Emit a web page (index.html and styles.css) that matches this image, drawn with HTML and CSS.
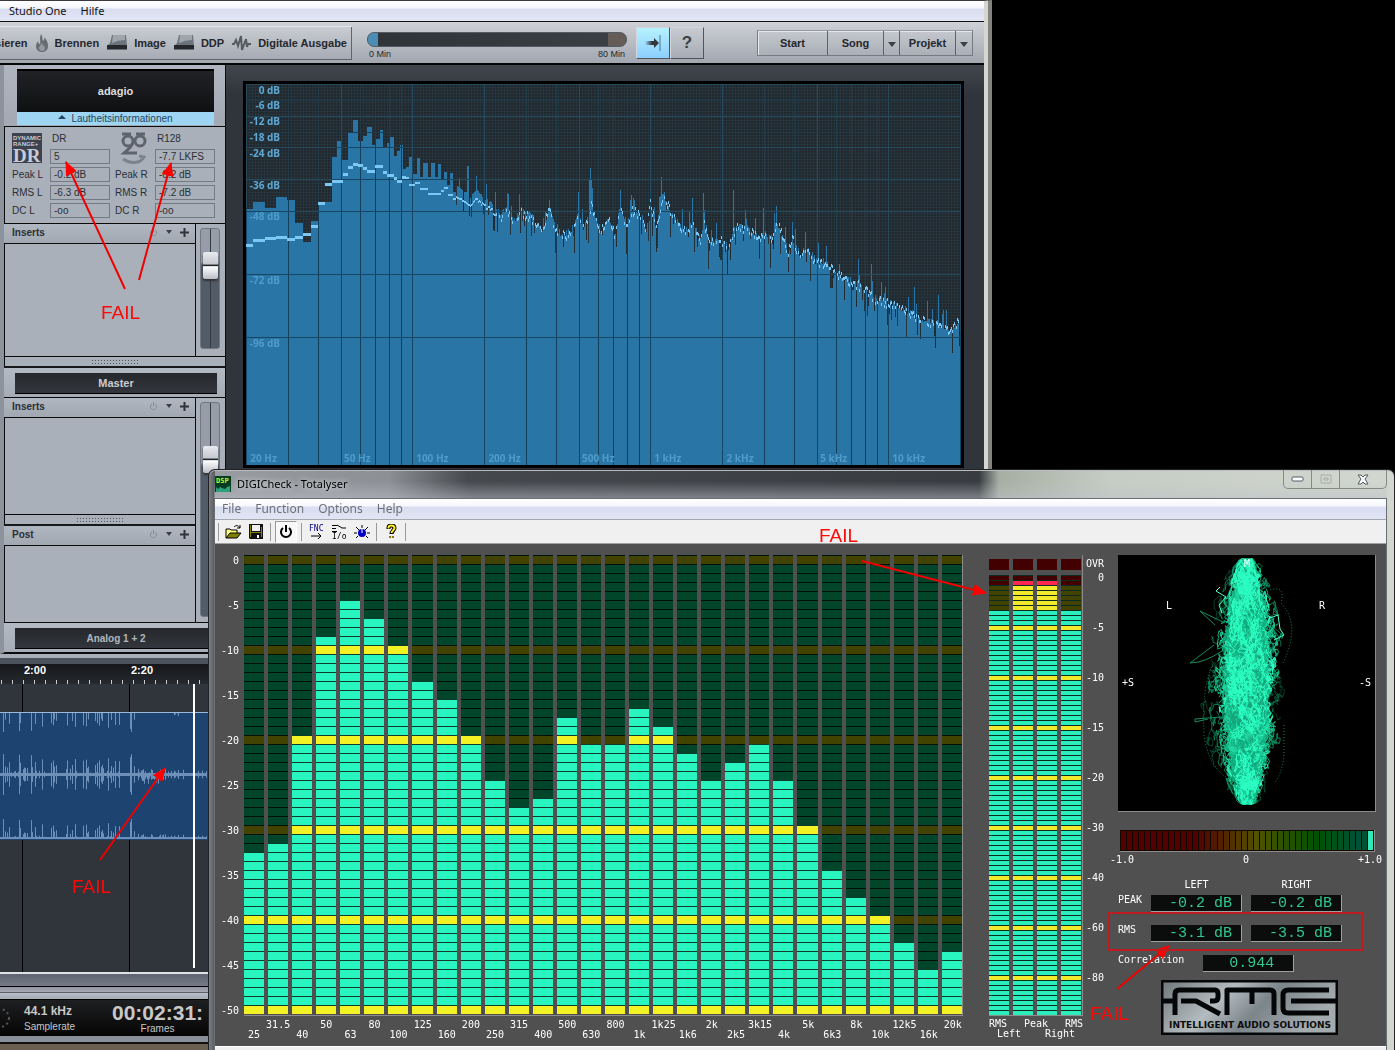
FILE: index.html
```html
<!DOCTYPE html>
<html lang="de">
<head>
    <meta charset="UTF-8">
    <meta name="viewport" content="width=device-width, initial-scale=1.0">
    <title>Studio One / DIGICheck - Totalyser</title>
    <link rel="stylesheet" href="styles.css">
</head>
<body>
    <!-- Studio One -->
    <section class="studio">
        <nav class="studio-menu">
            <button>Studio One</button>
            <button>Hilfe</button>
        </nav>

        <div class="studio-toolbar">
            <div class="tool-group">
                <button>Analysieren</button>
                <button>
                    <svg width="12" height="18" viewBox="0 0 12 18"><path d="M5 0c2 3 1 5 2 7 1-1 2-2 1-4 3 3 4 6 4 9 0 4-3 6-6 6s-6-2-6-6c0-2 1-3 2-5 0 2 1 3 2 3 1-3-1-5 1-10z" fill="#676c74"/><path d="M6 17c-2 0-3-2-3-3 0-2 2-3 3-5 0 2 3 3 3 5s-1 3-3 3z" fill="#9499a1"/></svg>
                    Brennen
                </button>
                <button>
                    <svg width="20" height="17" viewBox="0 0 20 17"><path d="M5 1h14l1 11H0l3-3z" fill="#6d737b"/><path d="M6 1h12v5q-7 0-13 3z" fill="#a0a5ac"/><path d="M0 11h20v4H0z" fill="#25282c"/><path d="M0 15h20v1H0z" fill="#666b73"/></svg>
                    Image
                </button>
                <button>
                    <svg width="20" height="17" viewBox="0 0 20 17"><path d="M5 1h14l1 11H0l3-3z" fill="#6d737b"/><path d="M6 1h12v5q-7 0-13 3z" fill="#a0a5ac"/><path d="M0 11h20v4H0z" fill="#25282c"/><path d="M0 15h20v1H0z" fill="#666b73"/></svg>
                    DDP
                </button>
                <button>
                    <svg width="19" height="16" viewBox="0 0 19 16"><path d="M0 9h2l2-4 2 6 3-10 1 14 4-11 1 8 1-3h3" fill="none" stroke="#565b63" stroke-width="2"/></svg>
                    Digitale Ausgabe
                </button>
            </div>
            <div class="capacity">
                <div class="capacity-bar"></div>
                <div class="capacity-text"><span>0 Min</span><span>80 Min</span></div>
            </div>
            <div class="square-buttons">
                <button class="active" aria-label="Folgen"><svg width="16" height="16" viewBox="0 0 16 16"><defs><linearGradient id="fade"><stop offset="0" stop-color="#333" stop-opacity="0"/><stop offset=".5" stop-color="#30363c"/></linearGradient></defs><path d="M0 6h9V3l5 5-5 5v-3H0z" fill="url(#fade)"/><path d="M15 0v16" stroke="#50708a"/></svg></button>
                <button aria-label="Hilfe">?</button>
            </div>
            <div class="page-buttons">
                <button class="page">Start</button>
                <button>Song</button>
                <button class="arrow" aria-label="Songs"><i></i></button>
                <button>Projekt</button>
                <button class="arrow" aria-label="Projekte"><i></i></button>
            </div>
        </div>

        <div class="studio-body">
            <aside class="sidebar">
                <div class="track-title">
                    <div class="track-name">adagio</div>
                    <button class="loudness"><i></i>Lautheitsinformationen</button>
                </div>

                <div class="info">
                    <svg class="info-logo" width="30" height="30" viewBox="0 0 30 30"><rect width="30" height="30" fill="#3c4250"/><text x="1" y="7" class="dr-small">DYNAMIC</text><text x="1" y="13" class="dr-small">RANGE+</text><text x="1" y="29" class="dr-big">DR</text></svg>
                    <span class="top">DR</span>
                    <svg class="info-logo r128" width="30" height="32" viewBox="0 0 30 32"><g fill="none" stroke="#5e646e" stroke-width="3"><circle cx="9" cy="9" r="5"/><circle cx="21" cy="9" r="5"/><path d="M3 2h9M17 2h9M14 11c-2 5-6 7-9 10h13"/><path d="M4 27c7 5 17 5 21-2l-5-1" stroke="#7d838d"/></g></svg>
                    <span class="top">R128</span>
                    <output>5</output>
                    <output>-7.7 LKFS</output>
                    <span>Peak L</span><output>-0.2 dB</output><span>Peak R</span><output>-0.2 dB</output>
                    <span>RMS L</span><output>-6.3 dB</output><span>RMS R</span><output>-7.2 dB</output>
                    <span>DC L</span><output>-oo</output><span>DC R</span><output>-oo</output>
                </div>

                <div class="channel">
                    <div class="racks">
                        <div class="rack-head">Inserts <button class="power" aria-label="Aktiv"><svg width="9" height="9" viewBox="0 0 9 9"><path d="M3 2a3 3 0 1 0 3 0M4.500 0v4" fill="none" stroke="#868c96"/></svg></button><button aria-label="Menü"><i></i></button><button aria-label="Hinzufügen"><svg width="9" height="9" viewBox="0 0 9 9"><path d="M4.500 0v9M0 4.500h9" stroke="#30343a" stroke-width="2"/></svg></button></div>
                        <div class="rack-body rack-large"></div>
                    </div>
                    <input class="fader fader-short" type="range" min="0" max="100" value="75" aria-label="Pegel adagio">
                </div>
                <div class="splitter"><i></i></div>
                <div class="bus"><button>Master</button></div>
                <div class="channel">
                    <div class="racks">
                        <div class="rack-head">Inserts <button class="power" aria-label="Aktiv"><svg width="9" height="9" viewBox="0 0 9 9"><path d="M3 2a3 3 0 1 0 3 0M4.500 0v4" fill="none" stroke="#868c96"/></svg></button><button aria-label="Menü"><i></i></button><button aria-label="Hinzufügen"><svg width="9" height="9" viewBox="0 0 9 9"><path d="M4.500 0v9M0 4.500h9" stroke="#30343a" stroke-width="2"/></svg></button></div>
                        <div class="rack-body rack-medium"></div>
                        <div class="splitter"><i></i></div>
                        <div class="rack-head">Post <button class="power" aria-label="Aktiv"><svg width="9" height="9" viewBox="0 0 9 9"><path d="M3 2a3 3 0 1 0 3 0M4.500 0v4" fill="none" stroke="#868c96"/></svg></button><button aria-label="Menü"><i></i></button><button aria-label="Hinzufügen"><svg width="9" height="9" viewBox="0 0 9 9"><path d="M4.500 0v9M0 4.500h9" stroke="#30343a" stroke-width="2"/></svg></button></div>
                        <div class="rack-body rack-small"></div>
                    </div>
                    <input class="fader fader-long" type="range" min="0" max="100" value="77" aria-label="Pegel Master">
                </div>
                <div class="bus output"><button>Analog 1 + 2</button></div>
            </aside>

            <main class="spectrum-panel">
                <div class="spectrum" id="spectrum">
                    <canvas id="spectrum-canvas" width="715" height="381"></canvas>
                </div>
            </main>
        </div>

        <div class="timeline">
            <div class="ruler">
                <span>2:00</span><span>2:20</span><span>2:40</span>
            </div>
            <div class="track-area">
                <div class="clip"><canvas id="wave-canvas" width="207" height="127"></canvas></div>
                <div class="playhead"></div>
            </div>
        </div>
        <div class="timeline-scroll"></div>
        <div class="transport">
            <svg width="24" height="24" viewBox="0 0 24 24"><circle cx="11" cy="12" r="9" fill="none" stroke="#555" stroke-width="2" stroke-dasharray="2 3"/></svg>
            <div class="rate"><b>44.1 kHz</b><span>Samplerate</span></div>
            <div class="time"><b>00:02:31:</b><span>Frames</span></div>
        </div>
        <div class="studio-end"></div>
    </section>

    <!-- DIGICheck -->
    <section class="digi">
        <header class="digi-title">
            <svg width="16" height="16" viewBox="0 0 16 16"><rect width="16" height="16" fill="#063c22"/><path d="M1 16v-5l2 2 2-2 2 1 3 1 2-2 3-1v6z" fill="#2da07b"/><text x="1" y="7" class="dsp">DSP</text></svg>
            <h1>DIGICheck - Totalyser</h1>
            <div class="window-buttons">
                <button aria-label="Minimieren"><svg width="13" height="6" viewBox="0 0 13 6"><rect x="1" y="1" width="11" height="4" rx="1" fill="#fff" stroke="#555c66"/></svg></button>
                <button aria-label="Maximieren" disabled><svg width="12" height="10" viewBox="0 0 12 10"><path d="M1 1h10v8H1zM4 4h4v2H4z" fill="none" stroke="#a7aca6"/></svg></button>
                <button class="close" aria-label="Schließen"><svg width="12" height="11" viewBox="0 0 12 11"><path d="M1 1h3l2 2 2-2h3L8 5l3 5H8L6 8l-2 2H1l3-5z" fill="#fff" stroke="#50565e"/></svg></button>
            </div>
        </header>

        <div class="digi-client">
            <nav class="digi-menu">
                <button>File</button><button>Function</button><button>Options</button><button>Help</button>
            </nav>
            <div class="digi-toolbar">
                <hr>
                <button aria-label="Open"><svg width="17" height="16" viewBox="0 0 17 16"><path d="M1 14V5h4l1 1h6v3" fill="#ffff80" stroke="#000"/><path d="M1 14l4-5h11l-4 5z" fill="#808000" stroke="#000"/><path d="M9 3c2-2 4-2 6 1M15 1v3h-3" fill="none" stroke="#000"/></svg></button>
                <button aria-label="Save"><svg width="15" height="15" viewBox="0 0 15 15"><path d="M0 0h14v15H1L0 14z" fill="#111"/><path d="M1 1h1v12H1zM12 3h1v10h-1zM2 8h10v1H2z" fill="#808000"/><path d="M3 1h8v6H3z" fill="#eee"/><path d="M8 11h2v3H8z" fill="#fff"/></svg></button>
                <hr>
                <button class="pressed" aria-label="Power"><svg width="12" height="13" viewBox="0 0 12 13"><path d="M3 3a5 5 0 1 0 6 0M6 0v7" fill="none" stroke="#000" stroke-width="2"/></svg></button>
                <hr>
                <button aria-label="Function"><svg width="17" height="15" viewBox="0 0 17 15"><text x="1" y="7" class="fnc">FNC</text><path d="M3 12h9M10 9l3 3-3 3" fill="none" stroke="#000"/></svg></button>
                <button aria-label="Input Output"><svg width="16" height="15" viewBox="0 0 16 15"><path d="M1 1.500h5M1 4.500h4M1 7.500h5M6 1l5 3h4" fill="none" stroke="#000"/><text x="1" y="15" class="io">I/o</text></svg></button>
                <button aria-label="Level"><svg width="16" height="14" viewBox="0 0 16 14"><circle cx="8" cy="8" r="4" fill="#0000c8"/><path d="M8 0v3M2 2l3 3M14 2l-3 3M0 8h3M13 8h3M2 13l2-2M14 13l-2-2" stroke="#000"/><path d="M8 4v4" stroke="#fff"/></svg></button>
                <hr>
                <button aria-label="Help"><svg width="11" height="15" viewBox="0 0 11 15"><path d="M2.500 5V3.500c0-1 1-2 3-2s3 1 3 2.500c0 2-3 3-3 6M5.500 12v2" fill="none" stroke="#000" stroke-width="4"/><path d="M2.500 4.500v-1c0-1 1-2 3-2s3 1 3 2.500c0 2-3 3-3 5M5.500 12v2" fill="none" stroke="#ffee20" stroke-width="2"/></svg></button>
                <hr>
            </div>

            <div class="analyser">
                <div class="bands">
                    <div class="scale scale-bands" id="band-scale"></div>
                    <div class="band-block">
                        <div class="band-bars" id="band-bars"></div>
                        <div class="band-labels" id="band-labels"></div>
                    </div>
                </div>

                <div class="meters">
                    <div class="meter-block">
                        <div class="meter-bars">
                            <div class="meter"><div class="over"></div><div class="level rms"></div></div>
                            <div class="meter"><div class="over"></div><div class="level peak"></div></div>
                            <div class="meter"><div class="over"></div><div class="level peak"></div></div>
                            <div class="meter"><div class="over"></div><div class="level rms"></div></div>
                        </div>
                        <div class="meter-labels"><span>RMS</span><span>Peak</span><span>RMS</span></div>
                        <div class="meter-labels sides"><span>Left</span><span>Right</span></div>
                    </div>
                    <div class="scale scale-meters" id="meter-scale"><span class="ovr">OVR</span></div>
                </div>

                <div class="readout">
                    <div class="gonio">
                        <canvas id="gonio-canvas" width="256" height="256"></canvas>
                        <span class="m">M</span><span class="l">L</span><span class="r">R</span><span class="plus">+S</span><span class="minus">-S</span>
                    </div>
                    <div class="correlation" id="correlation"></div>
                    <div class="correlation-scale"><span>-1.0</span><span>0</span><span>+1.0</span></div>
                    <table class="values">
                        <tr><td></td><th scope="col">LEFT</th><th scope="col">RIGHT</th></tr>
                        <tr><th scope="row">PEAK</th><td><output>-0.2 dB</output></td><td><output>-0.2 dB</output></td></tr>
                        <tr><th scope="row">RMS</th><td><output>-3.1 dB</output></td><td><output>-3.5 dB</output></td></tr>
                    </table>
                    <div class="corr-value"><label for="corr">Correlation</label><output id="corr">0.944</output></div>
                    <svg class="rme" width="177" height="55" viewBox="0 0 177 55">
                        <defs><linearGradient id="steel" x2="1" y2=".3"><stop offset="0" stop-color="#6f777b"/><stop offset=".4" stop-color="#b4bcc0"/><stop offset=".65" stop-color="#7c858a"/><stop offset="1" stop-color="#a3abaf"/></linearGradient></defs>
                        <rect x="1" y="1" width="175" height="53" fill="url(#steel)" stroke="#050607" stroke-width="3"/>
                        <g fill="none" stroke="#050607" stroke-width="5" stroke-linejoin="round">
                            <path d="M2 21h12M14 35V14q0-4 4-4h36q3 0 3 4v3q0 4-4 4H49M20 21h15l24 13"/>
                            <path d="M66 35V10h43q4 0 4 4v21M91 10v14"/>
                            <path d="M168 10h-41q-5 0-5 5v13q0 5 5 5h41M130 21h45"/>
                        </g>
                        <text x="89" y="48" class="rme-text">INTELLIGENT AUDIO SOLUTIONS</text>
                    </svg>
                </div>
            </div>
            <div class="digi-status"></div>
        </div>
    </section>

    <!-- Markierungen -->
    <svg class="marks" width="1395" height="1050" viewBox="0 0 1395 1050">
        <defs><marker id="head" markerUnits="userSpaceOnUse" markerWidth="14" markerHeight="12" refX="13" refY="6" orient="auto"><path d="M0 0l14 6-14 6z" fill="#f00"/></marker></defs>
        <g stroke="#f00000" stroke-width="2" marker-end="url(#head)">
            <path d="M125 289L66 162"/>
            <path d="M139 280L171 163"/>
            <path d="M100 860L165 768"/>
            <path d="M862 561L986 593"/>
            <path d="M1117 989L1169 946"/>
        </g>
        <rect x="1109" y="913" width="253" height="37" fill="none" stroke="#c01c20" stroke-width="2"/>
        <text x="101" y="319">FAIL</text>
        <text x="72" y="893">FAIL</text>
        <text x="819" y="542">FAIL</text>
        <text x="1090" y="1020">FAIL</text>
    </svg>

    <script src="script.js"></script>
</body>
</html>
```

FILE: styles.css
```css
* {
    box-sizing: border-box;
}
body {
    margin: 0;
    height: 100vh;
    background-color: #000;
    font-family: "Liberation Sans", Arial, sans-serif;
    font-size: 11px;
    overflow: hidden;
    position: relative;
}
button {
    border: 0;
    margin: 0;
    padding: 0;
    background: none;
    color: inherit;
    font: inherit;
    white-space: nowrap;
}
svg, canvas {
    display: block;
    flex: none;
}

/* Studio One */
.studio {
    position: absolute;
    top: 0;
    left: 0;
    right: 403px;
    background-color: #a8aeb8;
    border-top: 1px solid #3c3a3e;
    border-right: 8px ridge #d6d6d0;
    box-shadow: inset -1px 0 #222;
}
.studio-menu {
    display: flex;
    gap: 14px;
    height: 21px;
    padding-left: 9px;
    background: linear-gradient(#fff 0, #f4f6fb 35%, #d8def0 40%, #e3e6f5);
    border-bottom: 1px solid #111;
    font-family: "Noto Sans", sans-serif;
    font-size: 11px;
    line-height: 18px;
    color: #111;
}
.studio-toolbar {
    display: flex;
    align-items: center;
    height: 43px;
    background: linear-gradient(#ced1d6, #a2a7b0);
    border-bottom: 2px solid #050608;
    font-weight: bold;
    color: #24272c;
}
.tool-group {
    display: flex;
    justify-content: flex-end;
    align-items: center;
    gap: 8px;
    width: 352px;
    height: 34px;
    padding-right: 5px;
    overflow: hidden;
    border: 1px solid #e2e4e8;
    border-width: 1px 0;
    border-bottom-color: #60656d;
    box-shadow: inset -1px 0 #60656d;
}
.tool-group button {
    display: flex;
    align-items: center;
    gap: 7px;
}
.capacity {
    width: 260px;
    margin-left: 15px;
    padding-top: 8px;
}
.capacity-bar {
    height: 15px;
    border-radius: 7px;
    border: 1px solid #555b63;
    background: linear-gradient(to right, #4c8db5 10px, #303439 10px, #3b3f44 240px, #655c58 240px);
}
.capacity-text {
    display: flex;
    justify-content: space-between;
    padding: 2px;
    font-size: 9px;
    font-weight: normal;
}
.square-buttons {
    display: flex;
    margin-left: 9px;
}
.square-buttons button {
    display: grid;
    place-items: center;
    width: 34px;
    height: 32px;
    border: 1px solid #d3d6da;
    border-right-color: #50555d;
    border-bottom-color: #50555d;
    font-size: 17px;
    color: #3b4047;
}
.square-buttons .active {
    background: linear-gradient(#b6f1ff, #8ccfff);
}
.page-buttons {
    display: flex;
    margin: 0 11px 0 auto;
    border: 1px solid #767b83;
    border-top-color: #9297a0;
    box-shadow: inset 1px 1px #e6e8eb;
}
.page-buttons button {
    width: 56px;
    height: 24px;
    border-right: 1px solid #5d626a;
}
.page-buttons .page {
    width: 70px;
}
.page-buttons .arrow {
    width: 16px;
}
.page-buttons button:last-child {
    border-right: 0;
}
.page-buttons i, .rack-head i {
    display: inline-block;
    border: 4px solid transparent;
    border-top: 5px solid #3b4047;
    border-bottom: 0;
}
.rack-head i {
    border-width: 3px;
    border-top-width: 4px;
    margin-bottom: 2px;
}
.studio-body {
    display: flex;
    padding-bottom: 4px;
}

/* Sidebar */
.sidebar {
    flex: none;
    width: 226px;
    border: 1px solid #0a0b0d;
    border-width: 0 1px 1px;
    border-left: 4px solid #8d939d;
    box-shadow: inset 1px 0 #0a0b0d;
    background-color: #aab0ba;
    font-size: 10px;
    color: #2b2f36;
}
.track-title {
    padding: 4px 11px 1px 13px;
    border-bottom: 1px solid #0a0b0d;
    background: linear-gradient(#b0b5bf, #a3a9b3);
}
.track-name {
    height: 43px;
    border-top: 2px solid #000;
    background: linear-gradient(#202226, #0f1012);
    color: #dedede;
    font-size: 11px;
    font-weight: bold;
    line-height: 40px;
    text-align: center;
}
.loudness {
    display: block;
    width: 100%;
    height: 13px;
    background-color: #9ed5f3;
    color: #24455e;
    line-height: 13px;
}
.loudness i {
    display: inline-block;
    margin: 0 5px 3px 0;
    border: 4px solid transparent;
    border-bottom: 4px solid #24455e;
    border-top: 0;
}
.info {
    display: grid;
    grid-template-columns: 33px 60px 35px 60px;
    column-gap: 5px;
    row-gap: 3px;
    align-items: center;
    height: 97px;
    padding: 5px 0 6px 8px;
    border-bottom: 1px solid #0a0b0d;
}
.info-logo {
    grid-row: span 2;
}
.info .r128 {
    grid-column: 3;
    margin-left: 4px;
}
.info .top {
    padding-left: 2px;
}
.info output {
    height: 15px;
    padding-left: 3px;
    border: 1px solid #747a84;
    line-height: 13px;
}
.info span {
    white-space: nowrap;
    line-height: 13px;
}
.dr-small {
    font: bold 6px "Liberation Sans", sans-serif;
    fill: #c8ccd4;
}
.dr-big {
    font: bold 19px "Liberation Serif", serif;
    fill: #c8ccd4;
}
.channel {
    display: flex;
    border-bottom: 1px solid #0a0b0d;
}
.racks {
    width: 192px;
    border-right: 1px solid #0a0b0d;
}
.rack-head {
    display: flex;
    align-items: center;
    gap: 8px;
    height: 20px;
    padding: 0 6px 2px 8px;
    border-bottom: 1px solid #0a0b0d;
    background: linear-gradient(#b1b7c0, #a2a8b2);
    font-weight: bold;
}
.rack-head .power {
    margin-left: auto;
}
.rack-large {
    height: 112px;
}
.rack-medium {
    height: 97px;
    border-bottom: 1px solid #0a0b0d;
}
.rack-small {
    height: 76px;
}
.splitter {
    height: 11px;
    border-bottom: 2px solid #16181b;
    padding-top: 2px;
}
.splitter i {
    display: block;
    width: 47px;
    height: 6px;
    margin: 0 auto;
    background: radial-gradient(circle, #50565f 1px, transparent 1px) 0 0 / 3px 3px;
}
.bus {
    padding: 5px 8px 3px 11px;
    border-bottom: 1px solid #0a0b0d;
    background: linear-gradient(#b4bac3, #a6acb6);
}
.bus button {
    display: block;
    width: 100%;
    height: 21px;
    border-bottom: 1px solid #000;
    background: linear-gradient(#24272b, #33373d);
    color: #c9cdd4;
    font-size: 11px;
    font-weight: bold;
}
.output button {
    font-size: 10px;
    color: #b2b7be;
}
.fader {
    appearance: none;
    writing-mode: vertical-lr;
    direction: rtl;
    width: 20px;
    margin: 4px 0 0 4px;
    border: 1px solid #707781;
    border-radius: 3px;
    background: linear-gradient(to right, transparent 9px, #343a42 9px 10px, transparent 10px), linear-gradient(#969da8 28%, #525c68 30%);
}
.fader-short {
    height: 121px;
}
.fader-long {
    height: 215px;
}
.fader::-webkit-slider-thumb {
    appearance: none;
    width: 15px;
    height: 27px;
    border-radius: 2px;
    background: linear-gradient(#e8ebef, #c4c9d0 45%, #1f2328 48%, #1f2328 52%, #fff 54%, #b9bec6);
    box-shadow: 0 2px 2px #333;
}

/* Spectrum */
.spectrum-panel {
    flex: 1;
    padding: 16px 20px 0 17px;
    background: linear-gradient(#42474d, #30343b 30px);
}
.spectrum {
    position: relative;
    border: 3px solid #000;
    font-family: "Noto Sans", sans-serif;
    font-weight: bold;
    font-size: 10px;
    color: #5fa8d4;
}
.spectrum canvas {
    width: 100%;
    height: 381px;
}
.spectrum span {
    position: absolute;
    line-height: 12px;
    white-space: nowrap;
}
.spectrum .db {
    right: calc(100% - 34px);
}
.spectrum .low {
    color: #4f9bca;
}
.spectrum .hz {
    bottom: 1px;
    color: #4f9bca;
}

/* Timeline */
.timeline {
    border-top: 6px solid #4b535d;
    background-color: #30343b;
    overflow: hidden;
}
.ruler {
    display: flex;
    height: 20px;
    padding-left: 22px;
    background: linear-gradient(to right, #ccc 1px, transparent 1px) 1px 100% / 11px 4px repeat-x, linear-gradient(#15171a, #262a2e);
    color: #fff;
    font-weight: bold;
}
.ruler span {
    width: 107px;
    padding-left: 2px;
    line-height: 12px;
}
.track-area {
    position: relative;
    height: 288px;
    padding-top: 28px;
    background: repeating-linear-gradient(to right, transparent 0 22px, #000 22px 23px, transparent 23px 107px);
}
.clip {
    border-top: 1px solid #9db8d8;
    background-color: #1d4470;
}
.playhead {
    position: absolute;
    top: 0;
    left: 193px;
    width: 2px;
    height: 284px;
    background-color: #fff;
}
.timeline-scroll {
    height: 28px;
    border-top: 2px solid #dfe3e8;
    border-bottom: 1px solid #000;
    background: linear-gradient(#5f6570, #757b86 12px, #000 12px, #000 13px, #8e96a1 13px, #a4abb5 18px, #000 18px, #bac0ca 19px, #aab0ba 23px);
}
.transport {
    display: flex;
    height: 36px;
    background: linear-gradient(#1e1f21, #050505);
    color: #c8c8c8;
}
.transport svg {
    margin: 6px 11px 0 -11px;
}
.transport div {
    display: flex;
    flex-direction: column;
}
.transport span {
    font-size: 10px;
}
.rate {
    width: 88px;
    padding-top: 4px;
    gap: 3px;
}
.rate b {
    font-size: 12px;
    line-height: 14px;
}
.time {
    align-items: center;
    padding-top: 2px;
}
.time b {
    font-size: 21px;
    line-height: 21px;
}
.studio-end {
    height: 14px;
    border-bottom: 6px solid #6c6150;
    background: linear-gradient(#8a9099 6px, #111 6px);
}

/* DIGICheck */
.digi {
    position: absolute;
    top: 469px;
    left: 208px;
    right: 0;
    bottom: 0;
    padding: 0 7px 0 5px;
    border: 1px solid #222;
    border-width: 1px 1px 0;
    border-radius: 7px 7px 0 0;
    background: linear-gradient(to right, #7c8086 0, #55595f 6px, transparent 6px), linear-gradient(to right, #999da2 0, #8c9095 180px, #45494e 260px, #383c41 770px, #a5aea3 790px, #c6cdc4 900px, #d2d7d0);
    box-shadow: inset 0 1px #b8bcc0;
    overflow: hidden;
}
.digi-title {
    display: flex;
    gap: 6px;
    height: 28px;
    padding: 6px 0 0 1px;
    background: linear-gradient(transparent 40%, rgba(190, 194, 200, 0.5));
}
.dsp {
    font: bold 7px "DejaVu Sans Mono", monospace;
    fill: #b7f531;
}
.digi-title h1 {
    margin: 0;
    font: 11px/16px "Noto Sans", sans-serif;
    color: #000;
    text-shadow: 0 0 6px #fff;
}
.window-buttons {
    display: flex;
    height: 19px;
    margin: -6px 0 0 auto;
    border: 1px solid #858a84;
    border-top: 0;
    border-radius: 0 0 5px 5px;
}
.window-buttons button {
    display: grid;
    place-items: center;
    width: 28px;
    border-right: 1px solid #858a84;
}
.window-buttons .close {
    width: 46px;
    border: 0;
}
.digi-client {
    border: 1px solid #6b6f74;
    background-color: #f0f0f0;
}
.digi-menu {
    display: flex;
    gap: 14px;
    height: 21px;
    padding-left: 7px;
    background: linear-gradient(#fff 0, #f6f7fc 35%, #d8def0 40%, #e1e5f4);
    border-bottom: 1px solid #a5a8b0;
    font-family: "Noto Sans", sans-serif;
    font-size: 12px;
    line-height: 18px;
    color: #6e7079;
}
.digi-toolbar {
    display: flex;
    align-items: center;
    height: 24px;
    padding-left: 2px;
    gap: 3px;
    background-color: #f0f0f0;
    border-bottom: 1px solid #a0a0a0;
}
.digi-toolbar button {
    display: grid;
    place-items: center;
    width: 20px;
    height: 22px;
}
.digi-toolbar .pressed {
    border: 1px solid #999;
    border-right-color: #fff;
    border-bottom-color: #fff;
    background-color: #f8f8f8;
    width: 22px;
}
.digi-toolbar hr {
    width: 1px;
    height: 18px;
    margin: 0 1px;
    border: 0;
    background-color: #999;
}
.fnc {
    font: 8px "DejaVu Sans Mono", monospace;
    fill: #000080;
}
.io {
    font: 8px "DejaVu Sans Mono", monospace;
}
.analyser {
    display: flex;
    height: 502px;
    padding-top: 11px;
    background-color: #505050;
    color: #fff;
    font: 10px/10px "DejaVu Sans Mono", monospace;
}
.scale span {
    display: block;
    text-align: right;
}
.bands {
    display: flex;
    flex: 1;
}
.scale-bands {
    width: 24px;
    margin-right: 5px;
}
.scale-bands span {
    height: 45px;
    padding-top: 1px;
}
.band-block {
    flex: 1;
}
.band-bars {
    display: flex;
    gap: 4px;
    border: 1px solid #8c8c8c;
    border-width: 0 1px 1px 0;
    padding-bottom: 1px;
}
.band {
    display: flex;
    align-items: flex-end;
    flex: 1;
    height: 459px;
    background: repeating-linear-gradient(to top, transparent 0 8px, #001008 8px 9px), repeating-linear-gradient(to top, #434300 0 9px, #01452b 9px 90px);
}
.band div {
    width: 100%;
    background: repeating-linear-gradient(to top, transparent 0 8px, #0c3b2d 8px 9px), repeating-linear-gradient(to top, #f2f224 0 9px, #28f5c0 9px 90px);
}
.band-labels {
    display: flex;
    gap: 4px;
    padding-top: 4px;
}
.band-labels span {
    display: flex;
    justify-content: center;
    flex: 1 1 0;
    min-width: 0;
}
.band-labels span:nth-child(odd) {
    padding-top: 10px;
}
.meters {
    display: flex;
    flex: none;
    margin: 0 6px 0 26px;
}
.meter-block {
    width: 94px;
}
.meter-bars {
    display: flex;
    gap: 4px;
    padding: 4px 1px 0 0;
    border: 1px solid #8c8c8c;
    border-width: 0 1px 1px 0;
}
.meter {
    flex: 1;
}
.over {
    height: 11px;
    margin-bottom: 5px;
    background-color: #430000;
}
.level {
    height: 440px;
}
.rms {
    background: repeating-linear-gradient(to top, transparent 0 4px, #0c2b20 4px 5px), linear-gradient(#430000 10px, #434300 10px 35px, transparent 35px), repeating-linear-gradient(to top, #2ceebd 0 35px, #f2e82c 35px 40px, #2ceebd 40px 50px);
}
.peak {
    background: repeating-linear-gradient(to top, transparent 0 4px, #0c2b20 4px 5px), linear-gradient(#430000 5px, #ff2850 5px 10px, #f2e82c 10px 35px, transparent 35px), repeating-linear-gradient(to top, #2ceebd 0 35px, #f2e82c 35px 40px, #2ceebd 40px 50px);
}
.meter-labels {
    display: flex;
    justify-content: space-between;
    padding-top: 3px;
}
.sides {
    padding: 0 8px;
}
.scale-meters {
    width: 20px;
    margin-left: 1px;
}
.scale-meters span {
    height: 50px;
    padding-top: 4px;
}
.scale-meters .ovr {
    height: 14px;
}

/* Readout */
.readout {
    flex: none;
    width: 272px;
    margin-right: 4px;
}
.gonio {
    position: relative;
    width: 258px;
    margin-left: 8px;
    border: 1px solid #8c8c8c;
    border-width: 0 1px 1px 0;
    background-color: #000;
}
.gonio span {
    position: absolute;
}
.m {
    top: 4px;
    left: 126px;
}
.l {
    top: 46px;
    left: 48px;
}
.r {
    top: 46px;
    right: 50px;
}
.plus {
    top: 123px;
    left: 4px;
}
.minus {
    top: 123px;
    right: 4px;
}
.correlation {
    display: flex;
    gap: 1px;
    width: 255px;
    height: 22px;
    margin: 18px 0 0 10px;
    padding: 1px;
    background-color: #100800;
    border: 1px solid #8c8c8c;
    border-width: 0 1px 1px 0;
}
.correlation i {
    flex: 1;
}
.correlation-scale {
    display: grid;
    grid-template-columns: 1fr 30px 1fr;
    padding: 3px 0 15px;
    text-align: center;
}
.correlation-scale span:first-child {
    text-align: left;
}
.correlation-scale span:last-child {
    text-align: right;
}
.values {
    margin-left: 8px;
    border-collapse: collapse;
}
.values th, .values td {
    padding: 0;
    font-weight: normal;
    text-align: left;
    vertical-align: top;
}
.values td {
    width: 100px;
    padding-bottom: 13px;
}
.values td:first-child {
    width: 33px;
    padding: 0;
}
.values th[scope="col"] {
    height: 15px;
    padding-right: 9px;
    text-align: center;
}
.readout output {
    display: block;
    width: 91px;
    height: 17px;
    padding-right: 9px;
    background-color: #0a0d0c;
    border: 1px solid #a0a0a0;
    border-width: 0 1px 1px 0;
    color: #30c890;
    font: 15px/17px "Liberation Mono", monospace;
    text-align: right;
}
.corr-value {
    display: flex;
    gap: 19px;
    margin-left: 8px;
}
.corr-value output {
    padding-right: 19px;
}
.rme {
    margin: 8px 0 0 51px;
}
.rme-text {
    font: bold 9px "DejaVu Sans", sans-serif;
    text-anchor: middle;
    fill: #0b0d0e;
}
.digi-status {
    height: 14px;
    border-top: 1px solid #fff;
}
.marks {
    position: absolute;
    top: 0;
    left: 0;
    pointer-events: none;
}
.marks text {
    font-size: 19px;
    fill: #ff0808;
}
```

FILE: script.js
```js
// Fester Startwert, damit die Kurven immer gleich aussehen
let seed = 7;
function rnd() {
    seed = (seed * 16807) % 2147483647;
    return seed / 2147483647;
}

function span(parent, text, className) {
    const el = document.createElement('span');
    el.textContent = text;
    if (className) el.className = className;
    parent.appendChild(el);
    return el;
}

// Terzbänder: Name und erstes leuchtendes Segment
const bands = [
    ['25', 33], ['31.5', 32], ['40', 20], ['50', 9], ['63', 5], ['80', 7], ['100', 10], ['125', 14],
    ['160', 16], ['200', 20], ['250', 25], ['315', 28], ['400', 27], ['500', 18], ['630', 21],
    ['800', 21], ['1k', 17], ['1k25', 19], ['1k6', 22], ['2k', 25], ['2k5', 23], ['3k15', 21],
    ['4k', 25], ['5k', 30], ['6k3', 35], ['8k', 38], ['10k', 40], ['12k5', 43], ['16k', 46], ['20k', 44]
];
const bandBars = document.getElementById('band-bars');
const bandLabels = document.getElementById('band-labels');
bands.forEach(([name, top]) => {
    const band = document.createElement('div');
    const lit = document.createElement('div');
    band.className = 'band';
    lit.style.height = ((51 - top) / 51 * 100) + '%';
    band.appendChild(lit);
    bandBars.appendChild(band);
    span(bandLabels, name);
});
for (let db = 0; db <= 50; db += 5) {
    span(document.getElementById('band-scale'), db ? '-' + db : '0');
}
['0', '-5', '-10', '-15', '-20', '-30', '-40', '-60', '-80'].forEach(t => span(document.getElementById('meter-scale'), t));

// Korrelationsbalken
const correlation = document.getElementById('correlation');
for (let i = 0; i < 42; i++) {
    const seg = document.createElement('i');
    const hue = i < 12 ? 0 : Math.min(160, (i - 12) * 6);
    seg.style.background = i === 41 ? '#30e8b8' : `hsl(${hue}, 100%, 16%)`;
    correlation.appendChild(seg);
}

// Spektrum
function drawSpectrum() {
    const c = document.getElementById('spectrum-canvas').getContext('2d');
    const W = 715, H = 381;
    const steps = [[0,209],[7,202],[19,208],[30,197],[41,200],[49,223],[57,242],[65,221],[72,202],[86,157],[91,141],[96,160],[102,132],[107,120],[112,141],[117,136],[121,127],[126,145],[130,139],[134,130],[137,148],[141,143],[144,137],[148,156],[151,151],[154,145],[157,169],[160,167],[163,157],[166,174],[171,158],[174,177],[177,163],[182,177],[185,163],[189,177],[192,164],[195,179],[198,172],[201,185],[204,173],[207,192]];
    const avgSteps = [[0,245],[7,240],[19,238],[30,237],[41,239],[49,237],[57,234],[65,226],[72,203],[79,184],[86,181],[97,174],[102,167],[107,164],[112,165],[117,168],[121,171],[129,166],[137,172],[141,175],[148,178],[151,181],[156,177],[163,184],[169,182],[174,188],[182,193],[195,190],[198,187],[202,194],[207,198]];
    const curve = [[210,196],[214,198],[220,202],[224,206],[230,197],[236,204],[244,208],[254,218],[261,209],[269,226],[273,211],[284,216],[297,228],[303,205],[309,230],[319,235],[329,225],[332,212],[337,228],[340,224],[345,204],[349,215],[354,230],[362,217],[369,235],[374,204],[380,226],[386,210],[394,214],[400,228],[404,202],[410,228],[416,196],[422,205],[430,221],[440,231],[447,224],[454,240],[458,224],[462,240],[475,240],[482,246],[489,227],[502,228],[512,238],[517,232],[526,240],[530,220],[536,235],[542,252],[546,238],[554,256],[560,248],[569,260],[582,263],[589,272],[604,280],[619,288],[629,298],[642,302],[659,310],[674,318],[689,322],[704,330],[714,318]];
    const peaks = {213:178, 221:166, 222:166, 230:176, 240:184, 249:192, 261:193, 273:194, 303:200, 332:192, 343:180, 344:168, 345:180, 346:188, 374:190, 385:195, 388:200, 404:190, 414:196, 415:177, 416:194, 418:192, 446:198, 457:193, 458:210, 487:190, 499:210, 517:208, 530:206, 546:222, 559:232, 612:259, 625:264, 668:287, 692:295};
    const at = (list, x) => { let v = list[0][1]; for (const s of list) { if (x >= s[0]) v = s[1]; } return v - 84; };
    const curveAt = x => {
        for (let i = 1; i < curve.length; i++) {
            if (x <= curve[i][0]) {
                const a = curve[i - 1], b = curve[i];
                return a[1] + (b[1] - a[1]) * (x - a[0]) / (b[0] - a[0]) - 84;
            }
        }
        return 236;
    };
    const tops = [], avg = [];
    for (let x = 0; x < W; x++) {
        if (x < 210) {
            tops[x] = at(steps, x);
            avg[x] = at(avgSteps, x);
        } else {
            const base = curveAt(x), k = Math.min(1, (x - 200) / 90), r = rnd();
            avg[x] = Math.round(base + (rnd() - 0.5) * 9 * k);
            tops[x] = base + (rnd() - 0.5) * 8 * k - (1 - k) * 12;
            if (r < 0.16) tops[x] = base + 8 + rnd() * 22 * k;
            if (r > 0.93) tops[x] = base - 5 - rnd() * 14;
            if (peaks[x]) tops[x] = peaks[x] - 84;
        }
    }

    const grid = (major, minor) => {
        for (let dec = 10; dec <= 10000; dec *= 10) {
            for (let m = 1; m < 10; m++) {
                const x = Math.round(238 * Math.log10(dec * m / 20));
                if (x < 0 || x >= W) continue;
                c.fillStyle = m === 1 || m === 2 || m === 5 ? major : minor;
                c.fillRect(x, 0, 1, H);
            }
        }
        [0, 6, 12, 18, 24, 36, 48, 72, 96].forEach(db => {
            c.fillStyle = db === 6 || db === 18 ? minor : major;
            c.fillRect(0, Math.round(db * 2.64), W, 1);
        });
    };

    c.fillStyle = '#22282c';
    c.fillRect(0, 0, W, H);
    c.fillStyle = 'rgba(45, 85, 105, 0.25)';
    for (let x = 0; x < W; x += 3) c.fillRect(x, 0, 1, H);
    for (let y = 0; y < H; y += 3) c.fillRect(0, y, W, 1);
    grid('#264a5c', '#203a48');

    c.save();
    c.beginPath();
    for (let x = 0; x < W; x++) c.rect(x, Math.round(tops[x]), 1, H);
    c.clip();
    c.fillStyle = '#2976a6';
    c.fillRect(0, 0, W, H);
    grid('#164664', '#12405c');
    c.restore();

    c.fillStyle = '#7cc8f4';
    for (let x = 0; x < W; x++) {
        if (x < 160) c.fillRect(x, avg[x] - 1, 1, 3);
        else if (x < 250) c.fillRect(x, avg[x], 1, 2);
        else if (rnd() < 0.72) c.fillRect(x, avg[x], 1, 3);
    }

    const box = document.getElementById('spectrum');
    [[0, 0], [6, 15], [12, 31], [18, 47], [24, 63], [36, 95], [48, 126], [72, 190], [96, 253]].forEach(([db, y]) => {
        span(box, (db ? '-' + db : '0') + ' dB', db > 40 ? 'db low' : 'db').style.top = y + 'px';
    });
    [['20 Hz', 0.6], ['50 Hz', 13.7], ['100 Hz', 23.8], ['200 Hz', 33.9], ['500 Hz', 47], ['1 kHz', 57.1], ['2 kHz', 67.2], ['5 kHz', 80.3], ['10 kHz', 90.4]].forEach(([t, x]) => {
        span(box, t, 'hz').style.left = x + '%';
    });
}

// Wellenform des Clips
function drawWave() {
    const c = document.getElementById('wave-canvas').getContext('2d');
    c.fillStyle = '#6d8fb8';
    c.fillRect(0, 60, 207, 3);
    c.fillRect(0, 124, 207, 2);
    for (let x = 0; x < 207; x++) {
        const loud = x < 60 || (x > 66 && x < 140);
        let a = rnd() < 0.35 ? rnd() * 8 : 0;
        if (loud && (x % 11 === 9 || x % 16 === 3)) a = 10 + rnd() * 9;
        if (!loud) a = rnd() > 0.6 ? rnd() * 4 : 0;
        c.fillRect(x, 60 - a, 1, a * 2 + 3);
        c.fillRect(x, 125 - a, 1, a);
        if (a > 6 || (x > 172 && x < 182)) c.fillRect(x, 0, 1, a);
    }
    for (let x = 142; x < 160; x++) c.fillRect(x, 61, 1, 2 + rnd() * 8);
}

// Goniometer
function drawGonio() {
    const c = document.getElementById('gonio-canvas').getContext('2d');
    const half = y => {
        const t = (y - 3) / 247;
        return 34 * Math.pow(Math.max(0, Math.sin(Math.PI * t)), 0.6);
    };
    const scribble = (count, spread, color, alpha) => {
        c.strokeStyle = color;
        c.globalAlpha = alpha;
        for (let i = 0; i < count; i++) {
            let y = 4 + rnd() * 245, x = (rnd() * 2 - 1) * half(y) * spread;
            c.beginPath();
            c.moveTo(129 + x, y);
            for (let j = 0; j < 12; j++) {
                const px = x, py = y;
                y = Math.max(4, Math.min(249, y + (rnd() - 0.5) * 16));
                const h = half(y) * spread + 3;
                x = Math.max(-h, Math.min(h, x + (rnd() - 0.5) * 10));
                c.quadraticCurveTo(129 + px + (rnd() - 0.5) * 6, (py + y) / 2, 129 + x, y);
            }
            c.stroke();
        }
    };
    c.lineWidth = 1;
    scribble(60, 1.3, '#0a6a42', 0.6);
    scribble(110, 1.05, '#0f9464', 0.8);
    scribble(130, 0.85, '#1cd49a', 0.8);
    c.globalAlpha = 0.75;
    c.fillStyle = '#20dca4';
    c.beginPath();
    for (let y = 4; y < 249; y += 3) c.lineTo(129 - half(y) * 0.6 - rnd() * 5, y);
    for (let y = 249; y > 4; y -= 3) c.lineTo(129 + half(y) * 0.6 + rnd() * 5, y);
    c.fill();
    scribble(90, 0.75, '#2cffc4', 0.9);
    scribble(70, 0.65, '#10a87c', 0.9);
    scribble(90, 0.45, '#2cffc4', 1);

    // Ausreißer
    c.globalAlpha = 1;
    c.strokeStyle = '#178a5c';
    c.stroke(new Path2D('M107 68L82 56L97 70M96 90L72 108Q86 108 104 96M103 162L77 164V167L90 164'));
    c.setLineDash([1, 2]);
    c.stroke(new Path2D('M94 112Q84 130 86 180Q90 210 108 222M152 35Q168 30 163 48Q184 70 164 110M166 170V200Q164 220 156 228'));
    c.setLineDash([]);
    c.strokeStyle = '#50ffd0';
    c.stroke(new Path2D('M152 63L160 60L162 74L166 80L156 85M102 32L98 36L108 42L101 50L104 58'));
}

drawSpectrum();
drawWave();
drawGonio();
```
